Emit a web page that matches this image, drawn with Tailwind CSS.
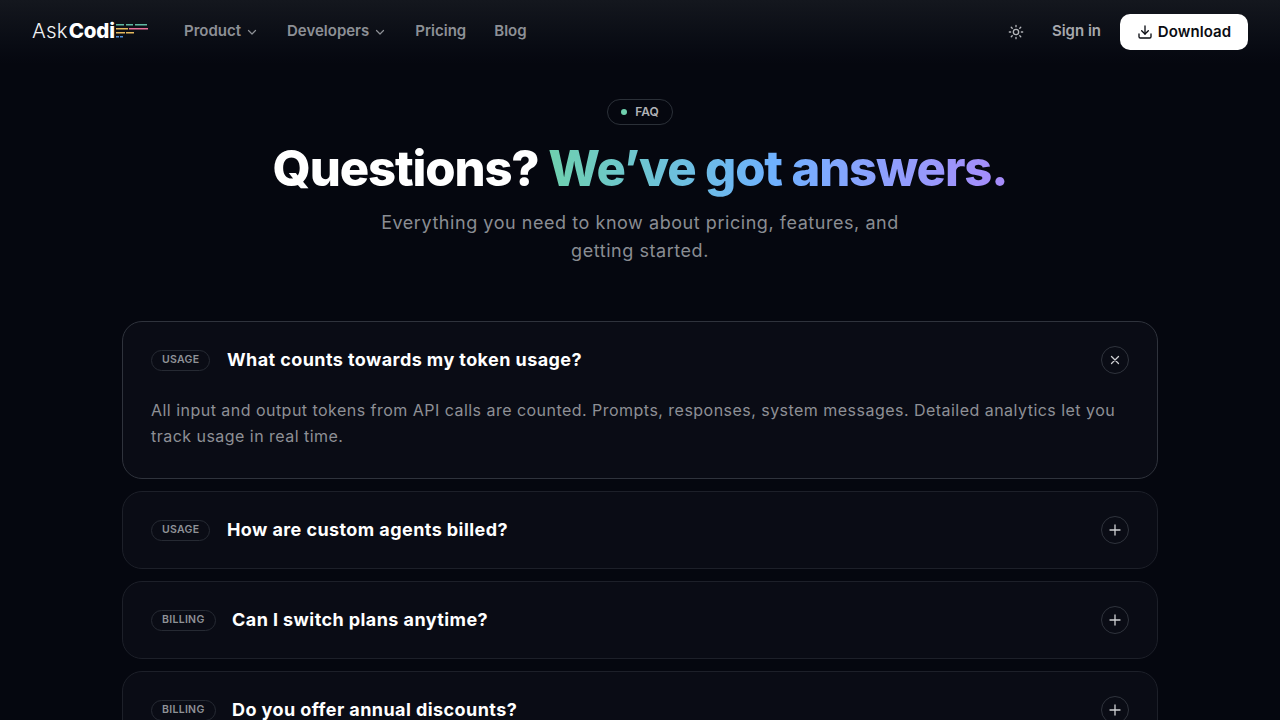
<!DOCTYPE html>
<html lang="en">
<head>
    <meta charset="UTF-8">
    <meta name="viewport" content="width=device-width, initial-scale=1.0">
    <title>AskCodi FAQ</title>
    <script src="https://cdn.jsdelivr.net/npm/@tailwindcss/browser@4"></script>
</head>
<body class="bg-[#05070f] h-[720px] overflow-hidden font-['Inter',sans-serif] text-white">
    <!-- nav -->
    <header class="h-[64px] px-8 flex items-center bg-gradient-to-b from-[#14171e] to-[#05070f]">
        <a class="flex items-center w-[152px] shrink-0 -mt-[1px]">
            <span class="text-[20.5px] leading-none font-light tracking-[0.2px] text-[#f1f2f4]">Ask</span><span class="ml-[1px] text-[20.5px] leading-none font-extrabold tracking-[-0.2px]">Codi</span>
            <svg class="-mt-[2px]" width="34" height="16" viewBox="0 0 34 16">
                <rect x="1" y="1" width="8" height="1.5" fill="#5fb8a0"/><rect x="11" y="1" width="7" height="1.5" fill="#5fb8a0"/><rect x="20" y="1" width="12" height="1.5" fill="#5fb8a0"/>
                <rect x="1" y="5" width="12" height="1.5" fill="#e6b85c"/><rect x="14" y="5" width="19" height="1.5" fill="#e8709a"/>
                <rect x="1" y="9" width="9" height="1.5" fill="#e6b85c"/><rect x="11" y="9" width="8" height="1.5" fill="#e6b85c"/>
                <rect x="1" y="13" width="3" height="1.5" fill="#4f8fd8"/><rect x="5" y="13" width="3" height="1.5" fill="#4f8fd8"/>
            </svg>
        </a>
        <nav class="flex items-center gap-[29px] -mt-[1px] text-[15px] font-semibold text-[#8d9096]">
            <a class="flex items-center gap-[6px]">Product
                <svg class="w-[10px] h-[10px] mr-[1px]" viewBox="0 0 10 10" fill="none" stroke="currentColor" stroke-width="1.2" stroke-linecap="round" stroke-linejoin="round"><path d="M1.5 3.5 5 7l3.5-3.5"/></svg>
            </a>
            <a class="flex items-center gap-[6px]">Developers
                <svg class="w-[10px] h-[10px] mr-[1px]" viewBox="0 0 10 10" fill="none" stroke="currentColor" stroke-width="1.2" stroke-linecap="round" stroke-linejoin="round"><path d="M1.5 3.5 5 7l3.5-3.5"/></svg>
            </a>
            <a>Pricing</a>
            <a class="-ml-[1px]">Blog</a>
        </nav>
        <div class="ml-auto flex items-center">
            <svg class="w-4 h-4 text-[#b4b6ba]" viewBox="0 0 24 24" fill="none" stroke="currentColor" stroke-width="2" stroke-linecap="round"><circle cx="12" cy="12" r="4"/><path d="M12 2v2M12 20v2M4.9 4.9l1.4 1.4M17.7 17.7l1.4 1.4M2 12h2M20 12h2M6.3 17.7l-1.4 1.4M19.1 4.9l-1.4 1.4"/></svg>
            <a class="ml-[28px] -mt-[1px] text-[15px] font-semibold text-[#a6a8ad]">Sign in</a>
            <a class="ml-[19px] h-9 w-[128px] rounded-[10px] bg-white text-[#0a0c12] text-[15px] font-semibold tracking-[0.1px] flex items-center justify-center gap-[5px]">
                <svg class="w-4 h-4" viewBox="0 0 24 24" fill="none" stroke="currentColor" stroke-width="2" stroke-linecap="round" stroke-linejoin="round"><path d="M21 15v4a2 2 0 0 1-2 2H5a2 2 0 0 1-2-2v-4"/><path d="M7 10l5 5 5-5"/><path d="M12 15V3"/></svg>
                Download
            </a>
        </div>
    </header>

    <!-- hero -->
    <section class="pt-[35px] flex flex-col items-center text-center">
        <div class="h-[26px] w-[66px] rounded-full border border-[#2b3038] flex items-center justify-center gap-2 text-[12px] font-semibold text-[#b0b2b6]">
            <span class="w-[6px] h-[6px] rounded-full bg-[#6fd0ae]"></span>FAQ
        </div>
        <h1 class="mt-[14px] text-[49px] leading-[60px] font-extrabold tracking-[-1.15px]">Questions? <span class="bg-gradient-to-r from-[#6fd0ae] via-[#6fb0ff] to-[#a78bfa] bg-clip-text text-transparent">We’ve got answers.</span></h1>
        <p class="mt-[10px] w-[540px] text-[18px] leading-[28px] tracking-[0.55px] text-[#8a8d93]">Everything you need to know about pricing, features, and getting started.</p>
    </section>

    <!-- faq list -->
    <section class="mt-[56px] mx-[122px] flex flex-col gap-3">
        <div class="h-[158px] rounded-[20px] border border-[#2f333c] bg-[#0a0c15] px-7 pt-[24px]">
            <div class="flex items-center h-[28px]">
                <span class="h-[21px] px-[10px] rounded-full border border-[#262a33] text-[10.5px] font-semibold tracking-[0.3px] text-[#8f9297] flex items-center">USAGE</span>
                <h3 class="ml-[16.5px] -mt-[1px] text-[18px] font-bold tracking-[0.42px]">What counts towards my token usage?</h3>
                <span class="ml-auto w-7 h-7 rounded-full border border-[#2f333c] flex items-center justify-center text-[#d0d1d4]">
                    <svg class="w-[14px] h-[14px]" viewBox="0 0 14 14" fill="none" stroke="currentColor" stroke-width="1.3" stroke-linecap="round"><path d="M3.5 3.5l7 7M10.5 3.5l-7 7"/></svg>
                </span>
            </div>
            <p class="mt-[23px] text-[16px] leading-[26px] tracking-[0.47px] text-[#8e9096]">All input and output tokens from API calls are counted. Prompts, responses, system messages. Detailed analytics let you track usage in real time.</p>
        </div>

        <div class="h-[78px] rounded-[20px] border border-[#1d2029] bg-[#0a0c15] px-7 flex items-center">
            <span class="h-[21px] px-[10px] rounded-full border border-[#262a33] text-[10.5px] font-semibold tracking-[0.3px] text-[#8f9297] flex items-center">USAGE</span>
            <h3 class="ml-[16.5px] -mt-[1px] text-[18px] font-bold tracking-[0.42px]">How are custom agents billed?</h3>
            <span class="ml-auto w-7 h-7 rounded-full border border-[#2f333c] flex items-center justify-center text-[#d0d1d4]">
                <svg class="w-[14px] h-[14px]" viewBox="0 0 14 14" fill="none" stroke="currentColor" stroke-width="1.3" stroke-linecap="round"><path d="M7 2v10M2 7h10"/></svg>
            </span>
        </div>

        <div class="h-[78px] rounded-[20px] border border-[#1d2029] bg-[#0a0c15] px-7 flex items-center">
            <span class="h-[21px] px-[10px] rounded-full border border-[#262a33] text-[10.5px] font-semibold tracking-[0.3px] text-[#8f9297] flex items-center">BILLING</span>
            <h3 class="ml-[16.5px] -mt-[1px] text-[18px] font-bold tracking-[0.42px]">Can I switch plans anytime?</h3>
            <span class="ml-auto w-7 h-7 rounded-full border border-[#2f333c] flex items-center justify-center text-[#d0d1d4]">
                <svg class="w-[14px] h-[14px]" viewBox="0 0 14 14" fill="none" stroke="currentColor" stroke-width="1.3" stroke-linecap="round"><path d="M7 2v10M2 7h10"/></svg>
            </span>
        </div>

        <div class="h-[78px] rounded-[20px] border border-[#1d2029] bg-[#0a0c15] px-7 flex items-center">
            <span class="h-[21px] px-[10px] rounded-full border border-[#262a33] text-[10.5px] font-semibold tracking-[0.3px] text-[#8f9297] flex items-center">BILLING</span>
            <h3 class="ml-[16.5px] -mt-[1px] text-[18px] font-bold tracking-[0.42px]">Do you offer annual discounts?</h3>
            <span class="ml-auto w-7 h-7 rounded-full border border-[#2f333c] flex items-center justify-center text-[#d0d1d4]">
                <svg class="w-[14px] h-[14px]" viewBox="0 0 14 14" fill="none" stroke="currentColor" stroke-width="1.3" stroke-linecap="round"><path d="M7 2v10M2 7h10"/></svg>
            </span>
        </div>
    </section>
</body>
</html>
